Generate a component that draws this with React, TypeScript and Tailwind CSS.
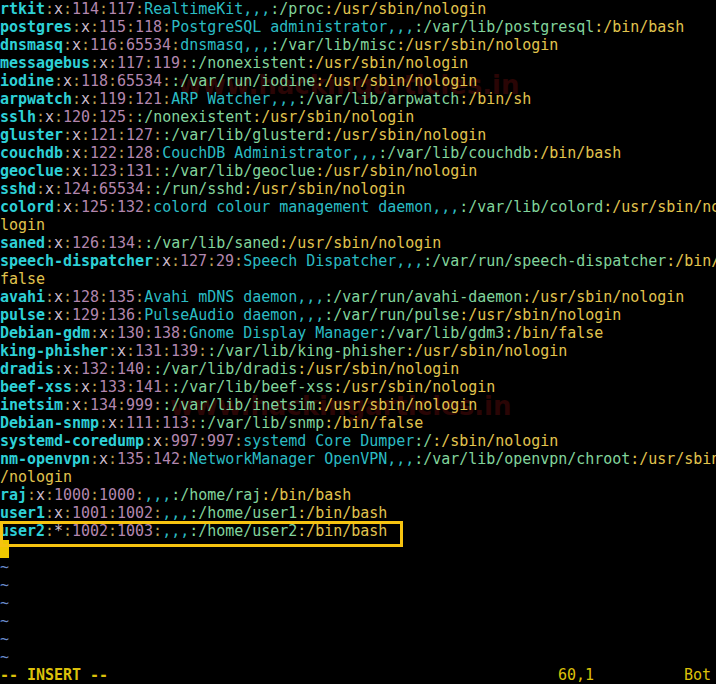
import React from 'react'

type Tok = { t: string; c: string }

const COLS = 80

const passwd = [
  'rtkit:x:114:117:RealtimeKit,,,:/proc:/usr/sbin/nologin',
  'postgres:x:115:118:PostgreSQL administrator,,,:/var/lib/postgresql:/bin/bash',
  'dnsmasq:x:116:65534:dnsmasq,,,:/var/lib/misc:/usr/sbin/nologin',
  'messagebus:x:117:119::/nonexistent:/usr/sbin/nologin',
  'iodine:x:118:65534::/var/run/iodine:/usr/sbin/nologin',
  'arpwatch:x:119:121:ARP Watcher,,,:/var/lib/arpwatch:/bin/sh',
  'sslh:x:120:125::/nonexistent:/usr/sbin/nologin',
  'gluster:x:121:127::/var/lib/glusterd:/usr/sbin/nologin',
  'couchdb:x:122:128:CouchDB Administrator,,,:/var/lib/couchdb:/bin/bash',
  'geoclue:x:123:131::/var/lib/geoclue:/usr/sbin/nologin',
  'sshd:x:124:65534::/run/sshd:/usr/sbin/nologin',
  'colord:x:125:132:colord colour management daemon,,,:/var/lib/colord:/usr/sbin/nologin',
  'saned:x:126:134::/var/lib/saned:/usr/sbin/nologin',
  'speech-dispatcher:x:127:29:Speech Dispatcher,,,:/var/run/speech-dispatcher:/bin/false',
  'avahi:x:128:135:Avahi mDNS daemon,,,:/var/run/avahi-daemon:/usr/sbin/nologin',
  'pulse:x:129:136:PulseAudio daemon,,,:/var/run/pulse:/usr/sbin/nologin',
  'Debian-gdm:x:130:138:Gnome Display Manager:/var/lib/gdm3:/bin/false',
  'king-phisher:x:131:139::/var/lib/king-phisher:/usr/sbin/nologin',
  'dradis:x:132:140::/var/lib/dradis:/usr/sbin/nologin',
  'beef-xss:x:133:141::/var/lib/beef-xss:/usr/sbin/nologin',
  'inetsim:x:134:999::/var/lib/inetsim:/usr/sbin/nologin',
  'Debian-snmp:x:111:113::/var/lib/snmp:/bin/false',
  'systemd-coredump:x:997:997:systemd Core Dumper:/:/sbin/nologin',
  'nm-openvpn:x:135:142:NetworkManager OpenVPN,,,:/var/lib/openvpn/chroot:/usr/sbin/nologin',
  'raj:x:1000:1000:,,,:/home/raj:/bin/bash',
  'user1:x:1001:1002:,,,:/home/user1:/bin/bash',
  'user2:*:1002:1003:,,,:/home/user2:/bin/bash',
]

const C = {
  user: 'text-[#2ed0d6] font-bold',
  colon: 'text-[#b9a24c]',
  x: 'text-[#cbbccb]',
  num: 'text-[#b386ae]',
  gecos: 'text-[#2bbcc4]',
  home: 'text-[#82d49c]',
  shell: 'text-[#e1c44e]',
}

const tokenize = (line: string): Tok[] => {
  const f = line.split(':')
  const kinds = [C.user, C.x, C.num, C.num, C.gecos, C.home, C.shell]
  const out: Tok[] = []
  f.forEach((v, i) => {
    if (i > 0) out.push({ t: ':', c: i === 6 ? C.shell : i === 5 ? C.home : C.colon })
    if (v) out.push({ t: v, c: kinds[i] })
  })
  return out
}

// split into 80 column screen rows, like vim wraps
const wrap = (toks: Tok[]): Tok[][] => {
  const rows: Tok[][] = [[]]
  let col = 0
  toks.forEach(({ t, c }) => {
    let rest = t
    while (rest.length) {
      if (col === COLS) {
        rows.push([])
        col = 0
      }
      const take = rest.slice(0, COLS - col)
      rows[rows.length - 1].push({ t: take, c })
      col += take.length
      rest = rest.slice(take.length)
    }
  })
  return rows
}

const rows = passwd.flatMap((l) => wrap(tokenize(l)))

const App = () => {
  return (
    <div className="relative w-[716px] h-[684px] overflow-hidden bg-black font-['DejaVu_Sans_Mono',monospace] text-[15px] leading-[18px] tracking-[-0.03px]">
      {/* watermark */}
      <div className="absolute left-[178px] top-[76px] text-[26px] font-bold text-[#2a0505] font-['DejaVu_Sans',sans-serif] tracking-[0px]">
        www.hackingarticles.in
      </div>
      <div className="absolute left-[170px] top-[397px] text-[26px] font-bold text-[#2a0505] font-['DejaVu_Sans',sans-serif] tracking-[0px]">
        www.hackingarticles.in
      </div>

      <div className="relative flex flex-col w-[720px]">
        {rows.map((r, i) => (
          <div key={i} className="h-[18px] whitespace-pre">
            {r.map((tk, j) => (
              <span key={j} className={tk.c}>
                {tk.t}
              </span>
            ))}
          </div>
        ))}
        <div className="h-[18px]">
          <div className="w-[9px] h-[18px] bg-[#f0c800]" />
        </div>
        {[0, 1, 2, 3, 4, 5].map((i) => (
          <div key={i} className="h-[18px] text-[#6b8ccc]">
            ~
          </div>
        ))}
        <div className="h-[18px] whitespace-pre text-[#dcc10a]">
          <span className="font-bold">-- INSERT --</span>
          {'                                                  60,1          Bot'}
        </div>
      </div>

      {/* highlight box */}
      <div className="absolute left-0 top-[521px] w-[403px] h-[26px] border-[3px] border-[#f6c310]" />
    </div>
  )
}

export default App
